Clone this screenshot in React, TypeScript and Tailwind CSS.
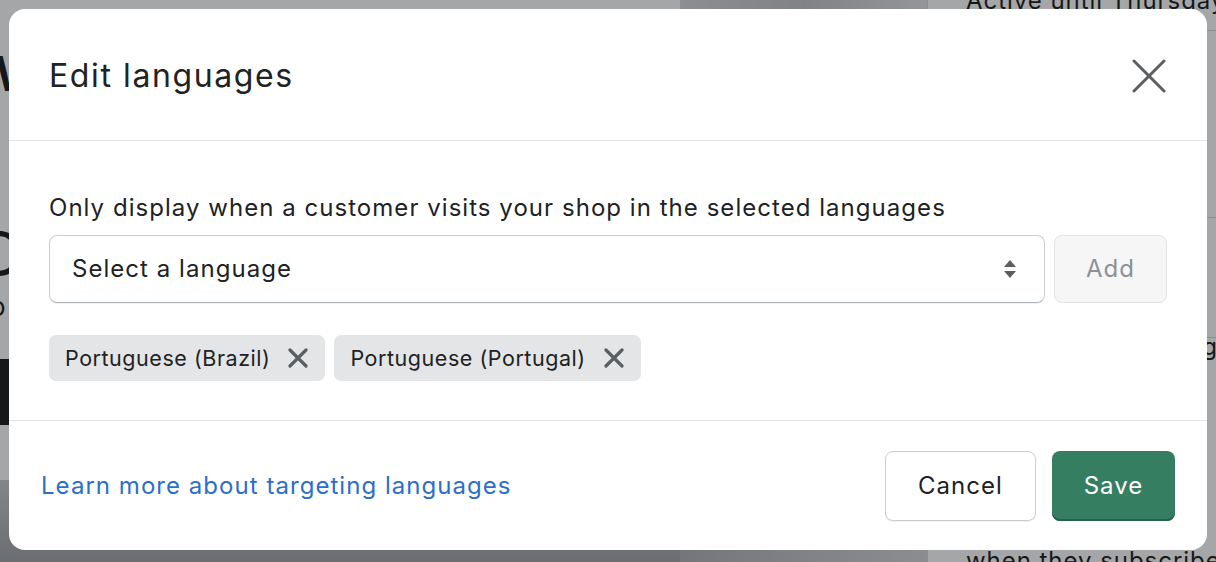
import React from "react";

function CloseIcon() {
  return (
    <svg width="34" height="34" viewBox="0 0 34 34" fill="none">
      <path d="M2 2L32 32M32 2L2 32" stroke="#5c5f62" strokeWidth="3" strokeLinecap="round" />
    </svg>
  );
}

function TagX() {
  return (
    <svg width="20" height="20" viewBox="0 0 20 20" fill="none">
      <path d="M2 2L18 18M18 2L2 18" stroke="#5c5f62" strokeWidth="3.2" strokeLinecap="round" />
    </svg>
  );
}

function SelectArrows() {
  return (
    <svg width="14" height="20" viewBox="0 0 14 20">
      <path d="M7 1L13 8H1Z" fill="#5c5f62" />
      <path d="M7 19L13 12H1Z" fill="#5c5f62" />
    </svg>
  );
}

const tags = ["Portuguese (Brazil)", "Portuguese (Portugal)"];

export default function App() {
  return (
    <div className="relative w-[1216px] h-[562px] overflow-hidden bg-white text-[#202223] font-['Inter',sans-serif]">
      {/* page behind the modal */}
      <div className="flex h-full">
        <div className="w-[680px] shrink-0 flex flex-col">
          <div className="mt-[52px] -ml-[26px] text-[48px] font-bold leading-[44px] text-[#111213]">W</div>
          <div className="mt-[130px] -ml-[24px] text-[62px] leading-[56px] text-[#111213]">O</div>
          <div className="mt-[10px] -ml-[10px] text-[26px] leading-[30px] text-[#111213]">o</div>
          <div className="mt-[37px] h-[66px] w-[120px] -ml-[100px] bg-[#111213]" />
          <div className="mt-[55px] flex-1 bg-gradient-to-b from-[#c8cacd] to-[#9fa2a6]" />
        </div>
        <div className="w-[247px] shrink-0 flex flex-col">
          <div className="h-[18px] bg-gradient-to-r from-[#d7d9dc] via-[#c3c5c8] to-[#e4e5e7]" />
          <div className="flex-1" />
          <div className="h-[30px] bg-gradient-to-r from-[#aeb1b5] to-[#d5d7da]" />
        </div>
        <div className="flex-1 min-w-0 flex flex-col border-l border-[#d5d7da] pl-[38px] tracking-[0.06em]">
          <div className="-mt-[14px] text-[24px] leading-[30px] text-[#111213] whitespace-nowrap">Active until Thursday, July</div>
          <div className="mt-[14px] -ml-[38px] border-b border-[#d5d7da]" />
          <div className="h-[186px]" />
          <div className="-ml-[38px] border-b border-[#d5d7da]" />
          <div className="h-[119px]" />
          <div className="-ml-[38px] border-b border-[#d5d7da]" />
          <div className="mt-[-6px] text-[24px] leading-[30px] text-[#111213] whitespace-nowrap pl-[200px]">languag</div>
          <div className="flex-1" />
          <div className="text-[24px] leading-[30px] text-[#111213] whitespace-nowrap pl-[200px]">a</div>
          <div className="mt-[6px] -mb-[14px] text-[24px] leading-[30px] text-[#111213] whitespace-nowrap">when they subscribe</div>
        </div>
      </div>

      {/* backdrop + modal */}
      <div className="absolute inset-0 bg-[#1c2024]/[0.4] p-[9px]">
        <div className="w-[1198px] h-[541px] rounded-[16px] bg-white flex flex-col overflow-hidden tracking-[0.065em]">
          <div className="h-[132px] shrink-0 border-b border-[#e1e3e5] flex items-center justify-between pl-[40px] pr-[41px] pt-[2px]">
            <h1 className="text-[32px] leading-[40px] text-[#202223] tracking-[0.05em]">Edit languages</h1>
            <button className="w-[34px] h-[34px] flex items-center justify-center">
              <CloseIcon />
            </button>
          </div>

          <div className="px-[40px] pt-[51px] pb-[39px] border-b border-[#e1e3e5]">
            <div className="text-[24px] leading-[32px] text-[#202223] whitespace-nowrap">
              Only display when a customer visits your shop in the selected languages
            </div>
            <div className="mt-[11px] flex gap-[9px]">
              <div className="flex-1 h-[68px] rounded-[8px] border border-[#c9cccf] border-b-[#aeb4b9] shadow-[0_1px_0_rgba(0,0,0,0.05)] flex items-center justify-between pl-[22px] pr-[27px]">
                <span className="text-[24px] text-[#202223]">Select a language</span>
                <SelectArrows />
              </div>
              <button className="w-[113px] h-[68px] rounded-[8px] border border-[#e1e3e5] bg-[#f6f6f7] text-[24px] text-[#8c9196]">
                Add
              </button>
            </div>
            <div className="mt-[32px] flex gap-[9px]">
              {tags.map((t) => (
                <div
                  key={t}
                  className="h-[46px] rounded-[7px] bg-[#e4e5e7] flex items-center pl-[16px] pr-[17px] gap-[18px]"
                >
                  <span className="text-[21.5px] tracking-[0.025em] text-[#202223]">{t}</span>
                  <TagX />
                </div>
              ))}
            </div>
          </div>

          <div className="flex-1 flex items-center justify-between pl-[32px] pr-[32px] pt-[1px]">
            <a className="text-[24px] text-[#2c6ecb]">Learn more about targeting languages</a>
            <div className="flex gap-[16px]">
              <button className="w-[151px] h-[70px] rounded-[8px] border border-[#c9cccf] bg-white shadow-[0_1px_0_rgba(0,0,0,0.05)] text-[24px] text-[#202223]">
                Cancel
              </button>
              <button className="w-[123px] h-[70px] rounded-[8px] bg-[#367e61] shadow-[inset_0_-2px_0_#24624a] text-[24px] text-white">
                Save
              </button>
            </div>
          </div>
        </div>
      </div>
    </div>
  );
}
